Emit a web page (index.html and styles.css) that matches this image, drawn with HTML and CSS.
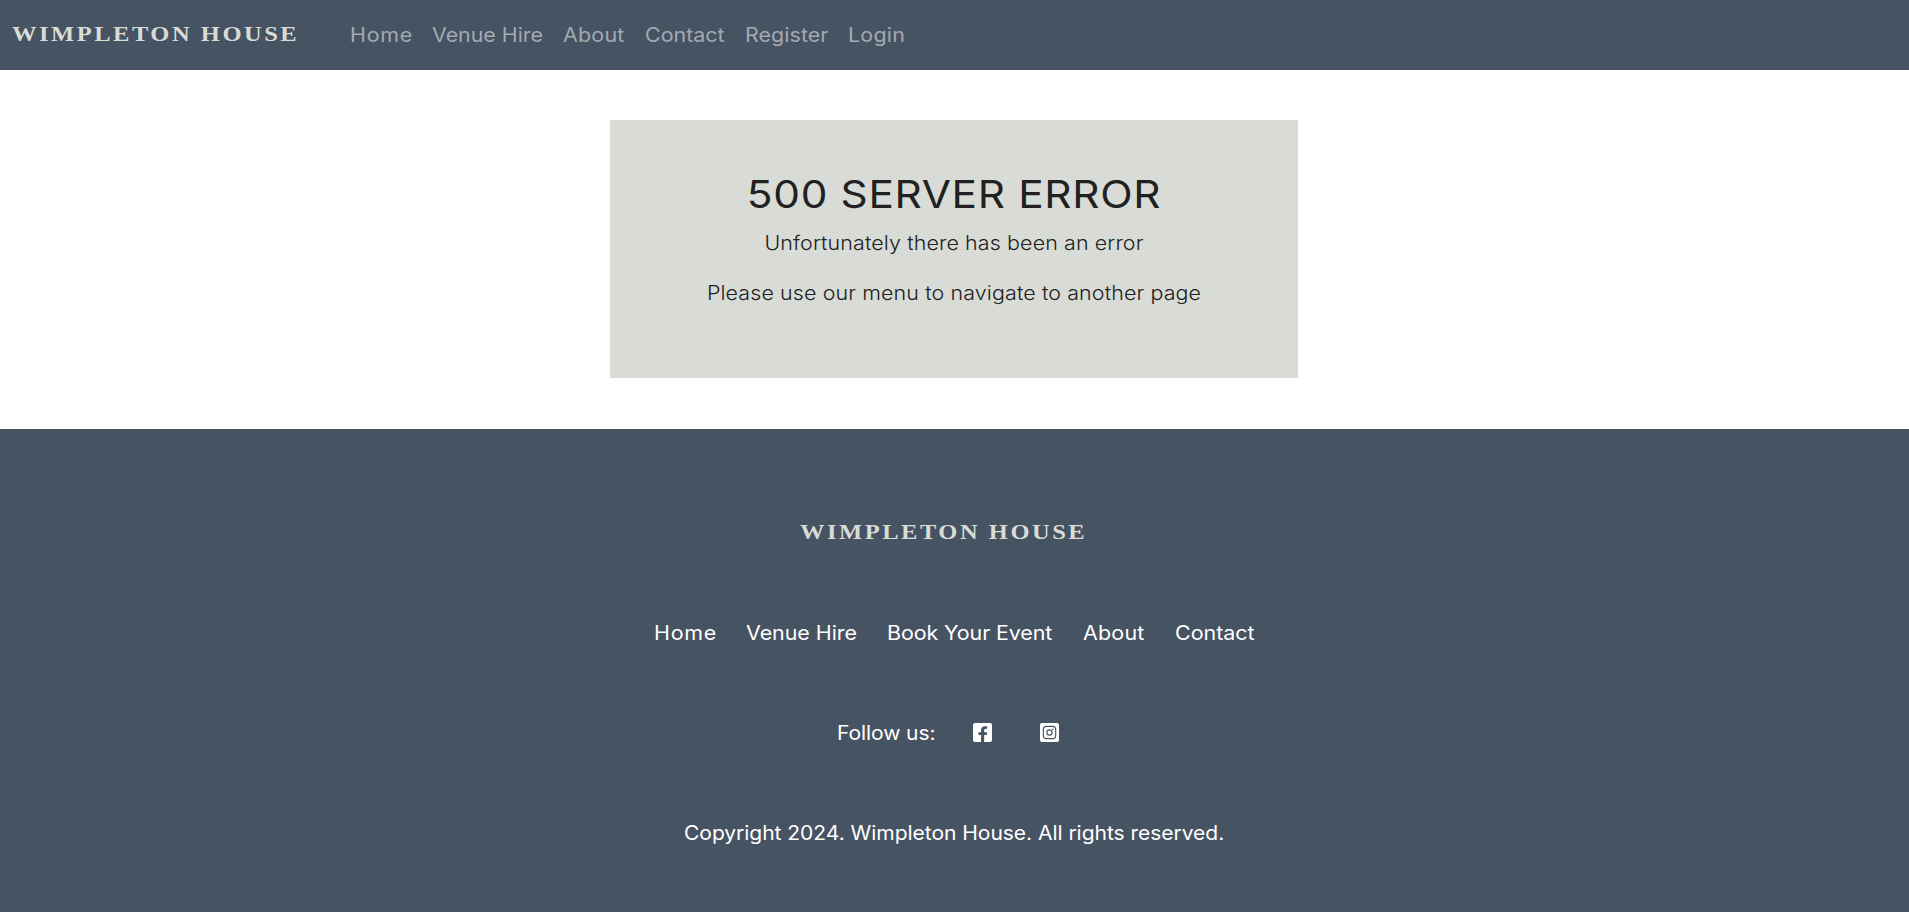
FILE: index.html
```html
<!DOCTYPE html>
<html lang="en">
<head>
<meta charset="utf-8">
<title>Wimpleton House</title>
<link rel="stylesheet" href="styles.css">
</head>
<body>
<header class="navbar">
  <a class="brand">WIMPLETON HOUSE</a>
  <nav class="nav-links">
    <a class="home">Home</a><a class="venue">Venue Hire</a><a class="about">About</a><a class="contact">Contact</a><a class="register">Register</a><a class="login">Login</a>
  </nav>
</header>
<main class="content">
  <section class="error-box">
    <h1>500 SERVER ERROR</h1>
    <p>Unfortunately there has been an error</p>
    <p>Please use our menu to navigate to another page</p>
  </section>
</main>
<footer class="footer">
  <a class="brand footer-brand">WIMPLETON HOUSE</a>
  <nav class="footer-links">
    <a class="home">Home</a><a class="venue">Venue Hire</a><a class="book">Book Your Event</a><a class="about">About</a><a class="contact">Contact</a>
  </nav>
  <div class="social">
    <span class="follow">Follow us:</span>
    <svg class="icon facebook" viewBox="0 0 448 448"><path fill="#fff" d="M48 0h352a48 48 0 0 1 48 48v352a48 48 0 0 1-48 48H263V285h60l11-67h-71v-43c0-19 9-37 38-37h34V81s-28-5-54-5c-55 0-91 33-91 93v49h-62v67h62v163H48a48 48 0 0 1-48-48V48A48 48 0 0 1 48 0z"/></svg>
    <svg class="icon instagram" viewBox="0 0 448 448"><rect width="448" height="448" rx="48" fill="#fff"/><g fill="none" stroke="#465362" stroke-width="27"><rect x="78" y="78" width="292" height="292" rx="76"/><circle cx="224" cy="224" r="62"/></g><circle cx="302" cy="146" r="18" fill="#465362"/></svg>
  </div>
  <p class="copyright">Copyright 2024. Wimpleton House. All rights reserved.</p>
</footer>
</body>
</html>
```
FILE: styles.css
```css
* { box-sizing: border-box; }
body {
  margin: 0;
  background: #fff;
  color: #212529;
  font: 400 19.5px/30px Inter, "Open Sans", sans-serif;
}
h1, p { margin: 0; }
/* Wide letterforms */
a, .follow {
  display: block;
  white-space: nowrap;
  transform: scaleX(1.1);
  transform-origin: left center;
}

.navbar {
  display: flex;
  align-items: flex-start;
  height: 70px;
  padding: 20px 12px;
  background: #465362;
}
.brand {
  width: 338px;
  margin-top: -1px;
  color: #d9dcd6;
  font: 700 21.3px/30px "Liberation Serif", serif;
  letter-spacing: 2.2px;
  transform: scaleX(1.15);
}
.nav-links { display: flex; color: #a3a9b1; }
.home { width: 82px; letter-spacing: .65px; }
.venue { width: 131px; letter-spacing: -.05px; }
.about { width: 82px; letter-spacing: .2px; }
.contact { width: 99.5px; letter-spacing: -.02px; }
.register { width: 103px; letter-spacing: .05px; }
.login { letter-spacing: .2px; }

.content { display: flex; justify-content: center; padding: 50px 1px 51px 0; }
.error-box {
  width: 688px;
  height: 258px;
  padding-top: 50px;
  background: #d9dcd6;
  color: #212121;
  text-align: center;
}
.error-box h1 {
  margin-bottom: 10px;
  font-size: 38.5px;
  font-weight: 400;
  line-height: 48px;
  letter-spacing: .6px;
  transform: scaleX(1.1);
}
.error-box p { margin-bottom: 20px; font-weight: 300; letter-spacing: .1px; transform: scaleX(1.1); }

.footer {
  display: flex;
  flex-direction: column;
  align-items: center;
  height: 483px;
  padding-top: 88px;
  background: #465362;
  color: #fff;
}
.footer-brand { width: 309px; margin: 0 0 71px; }
.footer-links { display: flex; margin-bottom: 70px; }
.footer-links .home { width: 92px; }
.footer-links .venue { width: 141px; }
.footer-links .book { width: 196.5px; letter-spacing: -.1px; }
.footer-links .about { width: 91.5px; }
.footer-links .contact { width: 81px; }
.social { display: flex; width: 235px; margin-bottom: 70px; }
.follow { width: 135.5px; letter-spacing: -.1px; transform: scaleX(1.08); }
.icon { width: 19px; height: 19px; margin-top: 5px; }
.instagram { margin-left: 48.5px; }
.copyright { letter-spacing: -.05px; transform: scaleX(1.08); }
```
